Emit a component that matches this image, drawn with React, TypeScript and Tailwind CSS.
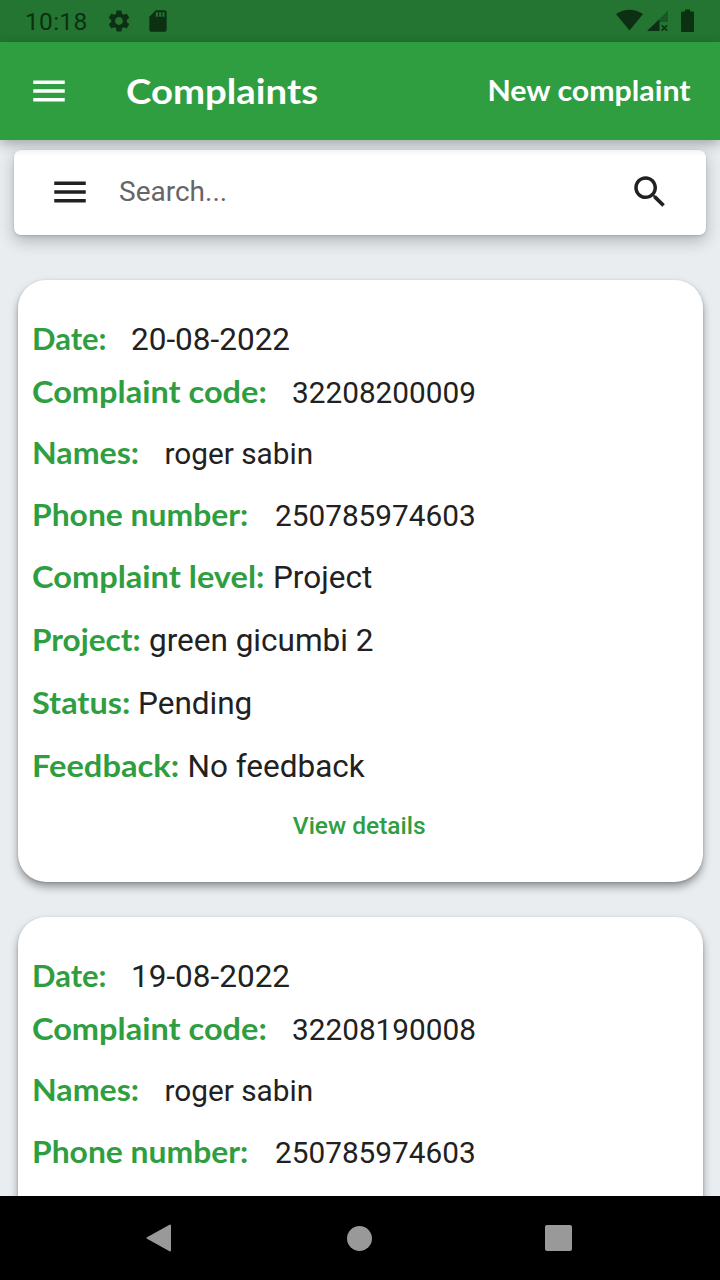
type Field = {
  label: string;
  value?: string;
  row: string;
  labelClass: string;
  scale: string;
  valueClass: string;
};

type Complaint = {
  date: string;
  code: string;
  names: string;
  phone: string;
  level?: string;
  project?: string;
  status?: string;
  feedback?: string;
};

const complaints: Complaint[] = [
  {
    date: '20-08-2022',
    code: '32208200009',
    names: 'roger sabin',
    phone: '250785974603',
    level: 'Project',
    project: 'green gicumbi 2',
    status: 'Pending',
    feedback: 'No feedback',
  },
  {
    date: '19-08-2022',
    code: '32208190008',
    names: 'roger sabin',
    phone: '250785974603',
  },
];

const small = 'text-[29.75px]';
const large = 'text-[31.5px]';

// labels are stretched a little, the font alone is too narrow
const getFields = (c: Complaint): Field[] => [
  { label: 'Date:', value: c.date, row: 'h-[53px]', labelClass: 'w-[99px]', scale: 'scale-x-[1.04]', valueClass: large },
  { label: 'Complaint code:', value: c.code, row: 'h-[61px]', labelClass: 'w-[260px]', scale: 'scale-x-[1.093]', valueClass: small },
  { label: 'Names:', value: c.names, row: 'h-[62px]', labelClass: 'w-[132.5px]', scale: 'scale-x-[1.08]', valueClass: small },
  { label: 'Phone number:', value: c.phone, row: 'h-[62px]', labelClass: 'w-[243px]', scale: 'scale-x-[1.07]', valueClass: small },
  { label: 'Complaint level:', value: c.level, row: 'h-[63px]', labelClass: 'w-[241px]', scale: 'scale-x-[1.095]', valueClass: large },
  { label: 'Project:', value: c.project, row: 'h-[63px]', labelClass: 'w-[117px]', scale: 'scale-x-[1.06]', valueClass: large },
  { label: 'Status:', value: c.status, row: 'h-[63px]', labelClass: 'w-[106px]', scale: 'scale-x-[1.09]', valueClass: large },
  { label: 'Feedback:', value: c.feedback, row: 'h-[63px]', labelClass: 'w-[155.5px]', scale: 'scale-x-[1.097]', valueClass: large },
];

function MenuIcon() {
  return (
    <svg className="h-[42px] w-[42px] shrink-0" viewBox="0 0 24 24" fill="currentColor">
      <path d="M3 18h18v-2H3v2zm0-5h18v-2H3v2zm0-7v2h18V6H3z" />
    </svg>
  );
}

function StatusBar() {
  return (
    <div className="flex h-[42px] shrink-0 items-center bg-[#237531] pl-[25px] text-[#0d3015]">
      <span className="w-[80px] pt-[3px] text-[24.5px] leading-none tracking-[0.3px]">10:18</span>
      <svg className="ml-[0.5px] h-[26px] w-[26px]" viewBox="0 0 24 24" fill="currentColor">
        <path d="M19.14 12.94c.04-.3.06-.61.06-.94 0-.32-.02-.64-.07-.94l2.03-1.58c.18-.14.23-.41.12-.61l-1.92-3.32c-.12-.22-.37-.29-.59-.22l-2.39.96c-.5-.38-1.03-.7-1.62-.94l-.36-2.54c-.04-.24-.24-.41-.48-.41h-3.84c-.24 0-.43.17-.47.41l-.36 2.54c-.59.24-1.13.57-1.62.94l-2.39-.96c-.22-.08-.47 0-.59.22L2.74 8.87c-.12.21-.08.47.12.61l2.03 1.58c-.05.3-.09.63-.09.94s.02.64.07.94l-2.03 1.58c-.18.14-.23.41-.12.61l1.92 3.32c.12.22.37.29.59.22l2.39-.96c.5.38 1.03.7 1.62.94l.36 2.54c.05.24.24.41.48.41h3.84c.24 0 .44-.17.47-.41l.36-2.54c.59-.24 1.13-.56 1.62-.94l2.39.96c.22.08.47 0 .59-.22l1.92-3.32c.12-.22.07-.47-.12-.61l-2.01-1.58zM12 15.6c-1.98 0-3.6-1.62-3.6-3.6s1.62-3.6 3.6-3.6 3.6 1.62 3.6 3.6-1.62 3.6-3.6 3.6z" />
      </svg>
      <svg className="ml-[13px] h-[26px] w-[26px]" viewBox="0 0 24 24" fill="currentColor">
        <path d="M18 2h-8L4.02 8 4 20c0 1.1.9 2 2 2h12c1.1 0 2-.9 2-2V4c0-1.1-.9-2-2-2zm-6 6h-2V4h2v4zm3 0h-2V4h2v4zm3 0h-2V4h2v4z" />
      </svg>
      <svg className="ml-auto h-[42px] w-[104px] shrink-0" viewBox="0 0 104 42" fill="currentColor">
        <path d="M0 14Q13.500 5.500 27 14L13.500 30.500Z" />
        <path d="M31 31L43.500 19V31Z" />
        <path d="M43.500 19L52 10.500V22H43.500Z" opacity="0.4" />
        <path d="M45.700 25.200l5.400 5.400m0-5.400l-5.400 5.400" stroke="currentColor" strokeWidth="1.600" />
        <path d="M69 9.500h5v2h3a1 1 0 0 1 1 1V31a1 1 0 0 1-1 1H66a1 1 0 0 1-1-1V12.500a1 1 0 0 1 1-1h3Z" />
      </svg>
    </div>
  );
}

function Header() {
  return (
    <header className="relative z-10 flex h-[98px] shrink-0 items-center bg-[#2f9e41] pr-[29px] pl-7 font-['Lato'] font-bold text-white shadow-[0_4px_12px_rgba(0,0,0,0.3)]">
      <button className="flex">
        <MenuIcon />
      </button>
      <h1 className="ml-14 origin-left scale-x-[1.095] pb-px text-[35px]">Complaints</h1>
      <button className="ml-auto origin-right scale-x-[1.083] pb-0.5 text-[28px]">New complaint</button>
    </header>
  );
}

function SearchBar() {
  return (
    <div className="mx-3.5 mt-2.5 flex h-[85px] shrink-0 items-center rounded-[7px] bg-white pr-[35px] pb-px pl-[35px] text-[#212121] shadow-[0_6px_16px_rgba(0,0,0,0.24),0_1px_3px_rgba(0,0,0,0.15)]">
      <MenuIcon />
      <span className="ml-7 text-[28px] text-[#666666]">Search...</span>
      <svg className="ml-auto h-[42px] w-[42px]" viewBox="0 0 24 24" fill="currentColor">
        <path d="M15.500 14h-.79l-.28-.27C15.410 12.590 16 11.110 16 9.500 16 5.910 13.090 3 9.500 3S3 5.910 3 9.500 5.910 16 9.500 16c1.610 0 3.090-.59 4.230-1.570l.27.28v.79l5 4.990L20.490 19l-4.990-5zm-6 0C7.010 14 5 11.990 5 9.500S7.010 5 9.500 5 14 7.010 14 9.500 11.990 14 9.500 14z" />
      </svg>
    </div>
  );
}

function ComplaintCard({ complaint }: { complaint: Complaint }) {
  const fields = getFields(complaint).filter((field) => field.value);

  return (
    <article className="mr-[17px] ml-[17.5px] h-[602px] shrink-0 rounded-[28px] bg-white px-[14.5px] pt-[39px] shadow-[0_5px_9px_rgba(0,0,0,0.36),0_1px_3px_rgba(0,0,0,0.15)]">
      {fields.map((field) => (
        <div key={field.label} className={`flex items-baseline leading-10 whitespace-nowrap ${field.row}`}>
          <div className={`shrink-0 font-['Lato'] text-[29.75px] font-bold text-[#2f9e41] ${field.labelClass}`}>
            <span className={`inline-block origin-left ${field.scale}`}>{field.label}</span>
          </div>
          <span className={`text-[#212121] ${field.valueClass}`}>{field.value}</span>
        </div>
      ))}
      {/* details only open once a status is known */}
      {complaint.status && (
        <button className="mx-auto -mt-[3px] block pr-0.5 text-[24.5px] leading-10 font-medium text-[#2f9e41]">
          View details
        </button>
      )}
    </article>
  );
}

function NavigationBar() {
  return (
    <nav className="flex h-[84px] shrink-0 items-center bg-black pl-[145px] text-[#999999]">
      <svg className="h-7 w-7" viewBox="0 0 28 28" fill="currentColor" stroke="currentColor" strokeWidth="2" strokeLinejoin="round">
        <path d="M2.500 14L25 1.500V26.500Z" />
      </svg>
      <span className="ml-[174px] h-[25px] w-[25px] rounded-full bg-[#999999]" />
      <span className="ml-[173px] h-[26px] w-[27px] rounded-[2px] bg-[#999999]" />
    </nav>
  );
}

export default function App() {
  return (
    <div className="flex h-[1280px] w-[720px] flex-col overflow-hidden bg-[#e9edf0] font-['Roboto',sans-serif]">
      <StatusBar />
      <Header />
      <main className="flex min-h-0 flex-1 flex-col overflow-hidden">
        <SearchBar />
        <div className="mt-[45px] flex flex-col gap-[35px]">
          {complaints.map((complaint) => (
            <ComplaintCard key={complaint.code} complaint={complaint} />
          ))}
        </div>
      </main>
      <NavigationBar />
    </div>
  );
}
